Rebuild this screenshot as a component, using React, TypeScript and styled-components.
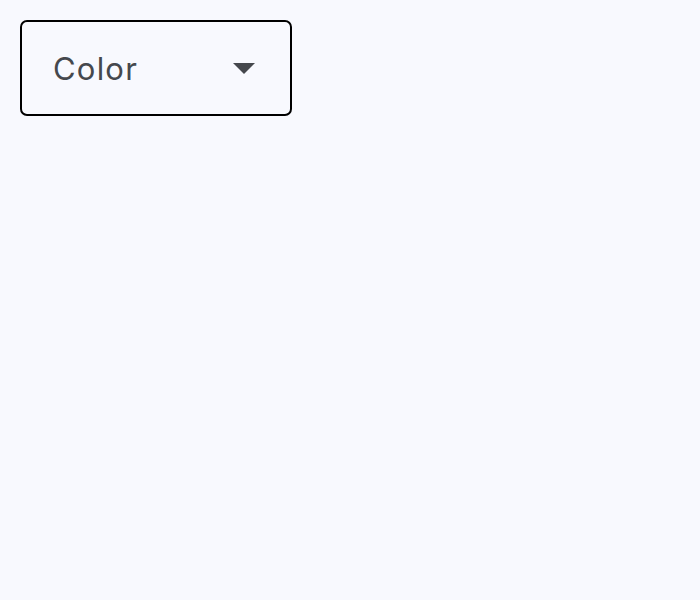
import React from "react";
import styled, { createGlobalStyle } from "styled-components";

const GlobalStyle = createGlobalStyle`
html, body {
	margin: 0;
	padding: 0;
	background: #f8f9fe;
	font-family: Inter, "Liberation Sans", sans-serif;
}
`;

const Page = styled.div`
	padding: 20px;
	min-height: 600px;
	box-sizing: border-box;
`;

const SelectBox = styled.div`
	width: 272px;
	height: 96px;
	box-sizing: border-box;
	border: 2px solid #000;
	border-radius: 7px;
	display: flex;
	align-items: center;
	justify-content: space-between;
	padding: 0 35px 0 31px;
	cursor: pointer;
`;

const Label = styled.span`
	font-size: 31px;
	color: #45484d;
	letter-spacing: 1.2px;
	margin-top: 1px;
`;

const Arrow = styled.span`
	width: 0;
	height: 0;
	border-left: 11px solid transparent;
	border-right: 11px solid transparent;
	border-top: 11px solid #45484d;
	margin-top: 1px;
`;

const App: React.FC = () => {
	return (
		<>
			<GlobalStyle />
			<Page>
				<SelectBox>
					<Label>Color</Label>
					<Arrow />
				</SelectBox>
			</Page>
		</>
	);
};

export default App;
